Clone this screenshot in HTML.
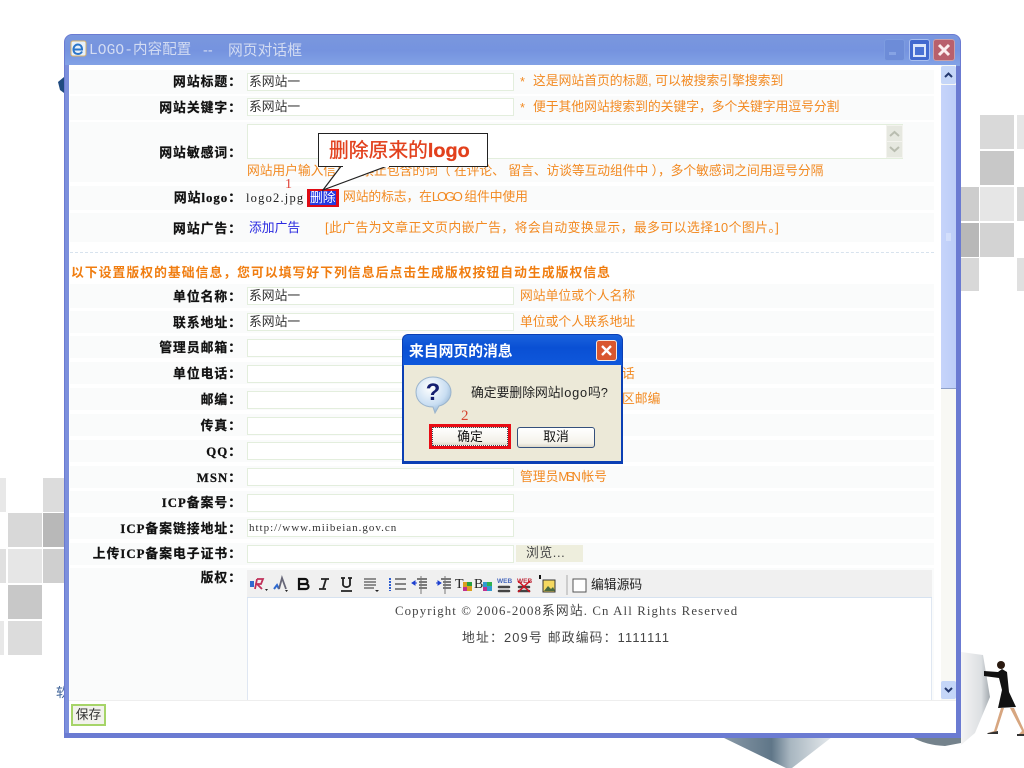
<!DOCTYPE html>
<html lang="zh-CN">
<head>
<meta charset="utf-8">
<title>LOGO-内容配置</title>
<style>
html,body{margin:0;padding:0;background:#fff;}
body{position:relative;width:1024px;height:768px;overflow:hidden;font-family:"Liberation Sans","Noto Sans CJK SC",sans-serif;font-size:12.8px;filter:blur(.3px);}
div,span.a{position:absolute;white-space:nowrap;box-sizing:border-box;}
.l{left:70px;width:172px;margin-top:1px;text-align:right;font-weight:bold;color:#111;height:18px;line-height:18px;letter-spacing:1px;font-family:"Liberation Serif","Noto Sans CJK TC",serif;-webkit-text-stroke:.25px #111;}
.i{left:247px;width:267px;height:18px;background:#fff;border:1px solid #e3eedd;color:#333;line-height:16px;padding-left:1px;}
.h{color:#f28a22;height:18px;line-height:18px;}
.b{left:70px;width:864px;background:#fafbfb;}
</style>
</head>
<body>
<!-- background squares right -->
<div style="left:980px;top:115px;width:34px;height:34px;background:#d9d9d9"></div>
<div style="left:1017px;top:115px;width:7px;height:34px;background:#e6e6e6"></div>
<div style="left:980px;top:151px;width:34px;height:34px;background:#c8c8c8"></div>
<div style="left:960px;top:187px;width:19px;height:34px;background:#cdcdcd"></div>
<div style="left:980px;top:187px;width:34px;height:34px;background:#e6e6e6"></div>
<div style="left:1017px;top:187px;width:7px;height:34px;background:#d8d8d8"></div>
<div style="left:960px;top:223px;width:19px;height:34px;background:#b8b8b8"></div>
<div style="left:980px;top:223px;width:34px;height:34px;background:#d3d3d3"></div>
<div style="left:960px;top:258px;width:19px;height:33px;background:#d8d8d8"></div>
<div style="left:1017px;top:258px;width:7px;height:33px;background:#e0e0e0"></div>
<!-- background squares left -->
<div style="left:0;top:478px;width:6px;height:34px;background:#e8e8e8"></div>
<div style="left:43px;top:478px;width:22px;height:34px;background:#dcdcdc"></div>
<div style="left:8px;top:513px;width:34px;height:34px;background:#d8d8d8"></div>
<div style="left:43px;top:513px;width:22px;height:34px;background:#b8b8b8"></div>
<div style="left:0;top:549px;width:6px;height:34px;background:#e0e0e0"></div>
<div style="left:8px;top:549px;width:34px;height:34px;background:#e6e6e6"></div>
<div style="left:43px;top:549px;width:22px;height:34px;background:#cfcfcf"></div>
<div style="left:8px;top:585px;width:34px;height:34px;background:#c8c8c8"></div>
<div style="left:0;top:621px;width:4px;height:34px;background:#e8e8e8"></div>
<div style="left:8px;top:621px;width:34px;height:34px;background:#dcdcdc"></div>
<div style="left:56px;top:684px;color:#3a5f96;font-size:13px;line-height:18px;">软</div>
<svg style="position:absolute;left:0;top:0" width="1024" height="768">
<defs>
<linearGradient id="v" x1="0" y1="0" x2="1" y2="0"><stop offset="0" stop-color="#8a9aa8"/><stop offset=".45" stop-color="#5f7688"/><stop offset=".62" stop-color="#a8b6c0"/><stop offset="1" stop-color="#e6eaed"/></linearGradient>
<linearGradient id="c" x1="0" y1="0" x2="1" y2="0"><stop offset="0" stop-color="#f4f4f4"/><stop offset=".7" stop-color="#dcdfe2"/><stop offset="1" stop-color="#a2a9ae"/></linearGradient>
</defs>
<path d="M58 82L64 77V93L60 90Z" fill="#1f4a80"/>
<path d="M722 737H832L792 768H786Z" fill="url(#v)"/>
<path d="M912 737H961V743L945 746Q925 745 912 737Z" fill="#74828c"/>
<path d="M961 652L983 655L990 697L975 733L961 745Z" fill="url(#c)"/>
<path d="M984 671L998 672L1002 669L1007 672L1009 692L1016 707L998 708L1002 690L999 678L984 676Z" fill="#111"/>
<circle cx="1001" cy="665" r="4" fill="#2a1a10"/>
<path d="M1001 708L1004 708L996 733H988L994 731ZM1010 708L1014 708L1024 730V735L1018 735L1022 731Z" fill="#d7a680"/>
<path d="M988 733L998 731V734H987ZM1017 734H1024V736H1017Z" fill="#333"/>
</svg>
<!-- window -->
<div style="left:64px;top:34px;width:897px;height:704px;background:#6b7bd2;border-radius:8px 8px 0 0;"></div>
<div style="left:65px;top:35px;width:895px;height:31px;background:linear-gradient(#7a97de,#7593df 50%,#83a3e6);border-radius:7px 7px 0 0;"></div>
<div style="left:69px;top:65px;width:887px;height:668px;background:#fff;"></div>
<div style="left:65px;top:65px;width:4px;height:668px;background:#7c8fdc;"></div>
<svg style="position:absolute;left:70px;top:40px" width="18" height="18" viewBox="0 0 18 18">
<rect x="1" y="1" width="15" height="15" rx="2" fill="#e8f0fa" stroke="#d9b36a"/>
<path d="M4 9.5H12C12 6 10 4.5 8 4.5C5.5 4.5 3.5 6.5 3.5 9.5C3.5 12.5 5.500 14 8 14C10 14 11.300 13 12 11.500" fill="none" stroke="#2a75c9" stroke-width="2"/>
</svg>
<div style="left:89px;top:42px;color:#d3dcf2;font-size:14.500px;line-height:18px;font-family:'Liberation Mono','Noto Sans CJK SC',monospace;letter-spacing:.1px;">LOGO-内容配置</div>
<div style="left:203px;top:42px;color:#d3dcf2;font-size:14.500px;line-height:18px;">--</div>
<div style="left:228px;top:42px;color:#d3dcf2;font-size:14.800px;line-height:18px;">网页对话框</div>
<div style="left:884px;top:39px;width:21px;height:22px;background:#6d8cd8;border-radius:3px;border:1px solid #7d9ce0;"></div>
<div style="left:889px;top:52px;width:7px;height:3px;background:#86a3e4;"></div>
<div style="left:909px;top:39px;width:21px;height:22px;background:#4169cf;border-radius:3px;border:1px solid #a9bff0;"></div>
<div style="left:913px;top:44px;width:13px;height:13px;border:2px solid #dbe6fa;border-top-width:3px;background:#4a72d4;"></div>
<div style="left:933px;top:39px;width:22px;height:22px;background:#b8606c;border-radius:3px;border:1px solid #c9a0a8;"></div>
<svg style="position:absolute;left:937px;top:43px" width="14" height="14"><path d="M2 2L12 12M12 2L2 12" stroke="#fbeeee" stroke-width="3"/></svg>

<!-- row bands -->
<div class="b" style="top:70px;height:24px"></div>
<div class="b" style="top:96px;height:24px"></div>
<div class="b" style="top:122px;height:60px"></div>
<div class="b" style="top:186px;height:24px"></div>
<div class="b" style="top:213px;height:29px"></div>
<div class="b" style="top:284px;height:24px"></div>
<div class="b" style="top:311px;height:22px"></div>
<div class="b" style="top:336px;height:22px"></div>
<div class="b" style="top:362px;height:22px"></div>
<div class="b" style="top:388px;height:22px"></div>
<div class="b" style="top:414px;height:22px"></div>
<div class="b" style="top:440px;height:22px"></div>
<div class="b" style="top:466px;height:22px"></div>
<div class="b" style="top:491px;height:22px"></div>
<div class="b" style="top:517px;height:22px"></div>
<div class="b" style="top:543px;height:22px"></div>
<div class="b" style="top:568px;height:132px"></div>
<div style="left:70px;top:252px;width:864px;border-top:1px dashed #d8e3ee;height:1px"></div>

<div class="l" style="top:72px">网站标题：</div>
<div class="i" style="top:73px">系网站一</div>
<div class="h" style="left:520px;top:73px">*</div>
<div class="h" style="left:533px;top:72px">这是网站首页的标题, 可以被搜索引擎搜索到</div>
<div class="l" style="top:98px">网站关键字：</div>
<div class="i" style="top:98px">系网站一</div>
<div class="h" style="left:520px;top:99px">*</div>
<div class="h" style="left:533px;top:98px;letter-spacing:-.03px">便于其他网站搜索到的关键字，多个关键字用逗号分割</div>
<div class="l" style="top:143px">网站敏感词：</div>
<div class="i" style="top:124px;width:656px;height:35px"></div>
<div style="left:886px;top:125px;width:17px;height:33px;background:#f3f3ee;"></div>
<div style="left:887px;top:126px;width:15px;height:15px;background:#e6e8e0;"></div>
<div style="left:887px;top:142px;width:15px;height:15px;background:#e6e8e0;"></div>
<svg style="position:absolute;left:887px;top:126px" width="15" height="32"><path d="M3 10L7.500 6L12 10M3 21L7.500 25L12 21" fill="none" stroke="#b9bdb0" stroke-width="2"/></svg>
<div class="h" style="left:247px;top:162px;letter-spacing:-.08px">网站用户输入信息，禁止包含的词（ 在评论、 留言、访谈等互动组件中 ），多个敏感词之间用逗号分隔</div>
<div class="l" style="top:188px">网站logo：</div>
<div style="left:246px;top:189px;color:#222;line-height:18px;font-family:'Liberation Serif',serif;letter-spacing:1.200px;font-size:12.500px;">logo2.jpg</div>
<div style="left:285px;top:177px;color:#e0453a;font-size:14px;line-height:16px;font-family:'Liberation Serif',serif;">1</div>
<div style="left:307px;top:189px;width:32px;height:18px;background:#df0a14;"></div>
<div style="left:310px;top:191px;width:26px;height:14px;background:#2438e0;color:#fff;line-height:14px;font-size:12.800px;">删除</div>
<div class="h" style="left:343px;top:188px;letter-spacing:-.1px">网站的标志，在<span style="letter-spacing:-2px">LOGO</span>&nbsp;组件中使用</div>
<div class="l" style="top:219px">网站广告：</div>
<div style="left:249px;top:219px;color:#2a2ae0;line-height:18px;">添加广告</div>
<div class="h" style="left:325px;top:219px;letter-spacing:.46px">[此广告为文章正文页内嵌广告，将会自动变换显示，最多可以选择10个图片。]</div>
<div style="left:71px;top:264px;color:#f07d10;font-weight:bold;line-height:18px;letter-spacing:1.050px;">以下设置版权的基础信息，您可以填写好下列信息后点击生成版权按钮自动生成版权信息</div>

<div class="l" style="top:287px">单位名称：</div>
<div class="i" style="top:287px">系网站一</div>
<div class="h" style="left:520px;top:287px">网站单位或个人名称</div>
<div class="l" style="top:313px">联系地址：</div>
<div class="i" style="top:313px">系网站一</div>
<div class="h" style="left:520px;top:313px">单位或个人联系地址</div>
<div class="l" style="top:338px">管理员邮箱：</div>
<div class="i" style="top:339px"></div>
<div class="l" style="top:364px">单位电话：</div>
<div class="i" style="top:365px"></div>
<div class="h" style="left:622px;top:365px">话</div>
<div class="l" style="top:390px">邮编：</div>
<div class="i" style="top:391px"></div>
<div class="h" style="left:622px;top:390px">区邮编</div>
<div class="l" style="top:416px">传真：</div>
<div class="i" style="top:417px"></div>
<div class="l" style="top:442px">QQ：</div>
<div class="i" style="top:442px"></div>
<div class="l" style="top:468px">MSN：</div>
<div class="i" style="top:468px"></div>
<div class="h" style="left:520px;top:468px">管理员<span style="letter-spacing:-3px">MSN</span>&nbsp;帐号</div>
<div class="l" style="top:493px">ICP备案号：</div>
<div class="i" style="top:494px"></div>
<div class="l" style="top:519px">ICP备案链接地址：</div>
<div class="i" style="top:519px;font-family:'Liberation Serif',serif;font-size:11px;letter-spacing:1px;">http://www.miibeian.gov.cn</div>
<div class="l" style="top:544px">上传ICP备案电子证书：</div>
<div class="i" style="top:545px"></div>
<div style="left:516px;top:545px;width:67px;height:17px;background:#eeeedd;color:#444;line-height:16px;padding-left:10px;letter-spacing:.6px;">浏览...</div>
<div class="l" style="top:568px">版权：</div>

<!-- editor -->
<div style="left:247px;top:597px;width:685px;height:104px;background:#fff;border-left:1px solid #dfe7f2;border-right:1px solid #dfe7f2;"></div>
<div style="left:247px;top:570px;width:685px;height:28px;background:#f0f0f0;border-bottom:1px solid #d6e2f0;"></div>
<svg style="position:absolute;left:247px;top:570px" width="340" height="28" viewBox="0 0 340 28">
<path d="M10 9l-2 10M10 9h6l-2 5h-4l5 5" fill="none" stroke="#c0305a" stroke-width="1.800"/>
<rect x="3" y="11" width="4" height="6" fill="#2f6ad0"/>
<path d="M18 19l3 0-1.500 2z" fill="#222"/>
<path d="M27 19l3-4 2 4" fill="none" stroke="#2f6ad0" stroke-width="2"/>
<path d="M32 19L35 8L39 19" fill="none" stroke="#667" stroke-width="1.800"/>
<path d="M38 20h3l-1.500 2z" fill="#222"/>
<path d="M52 9h6a2.500 2.500 0 0 1 0 5h-6zM52 14h7a2.500 2.500 0 0 1 0 5h-7z" fill="none" stroke="#111" stroke-width="2.200"/>
<path d="M76 19L79 9M74 9h8M72 19h7" stroke="#222" stroke-width="1.800" fill="none"/>
<path d="M96 8v7a4 4 0 0 0 7 0V8M94 8h4M101 8h4M94 21h11" stroke="#222" stroke-width="1.800" fill="none"/>
<path d="M117 9h12M117 12h12M117 15h12M117 18h10" stroke="#555" stroke-width="1.300"/>
<path d="M128 20h4l-2 2z" fill="#222"/>
<path d="M143 8v13" stroke="#2f5fd0" stroke-width="2" stroke-dasharray="2 1"/>
<path d="M148 9h11M148 14h11M148 19h11" stroke="#444" stroke-width="1.300"/>
<path d="M165 13h5M165 13l3-2v4z" stroke="#1c3fd0" fill="#1c3fd0"/>
<path d="M170 9h10M172 12h8M172 15h8M172 18h8" stroke="#333" stroke-width="1.200"/>
<path d="M174 6v18" stroke="#777"/>
<path d="M189 13h5M194 13l-3-2v4z" stroke="#1c3fd0" fill="#1c3fd0"/>
<path d="M194 9h10M196 12h8M196 15h8M196 18h8" stroke="#333" stroke-width="1.200"/>
<path d="M198 6v18" stroke="#777"/>
<text x="208" y="18" font-family="Liberation Serif, serif" font-size="14" fill="#222">T</text>
<rect x="216" y="12" width="9" height="9" fill="#d9a020"/><rect x="220" y="12" width="5" height="4" fill="#28a040"/><rect x="216" y="17" width="4" height="4" fill="#c03090"/>
<text x="227" y="18" font-family="Liberation Serif, serif" font-size="14" fill="#222">B</text>
<rect x="236" y="12" width="9" height="9" fill="#2f9ad0"/><rect x="240" y="12" width="5" height="4" fill="#30b050"/><rect x="236" y="17" width="4" height="4" fill="#c03090"/>
<text x="250" y="13" font-family="Liberation Sans, sans-serif" font-size="6.500" font-weight="bold" fill="#4466bb">WEB</text>
<path d="M252 17h10M252 21h10" stroke="#444" stroke-width="2.500" stroke-linecap="round"/>
<text x="270" y="13" font-family="Liberation Sans, sans-serif" font-size="6.500" font-weight="bold" fill="#c03040">WEB</text>
<path d="M272 17h10M272 21h10" stroke="#444" stroke-width="2.500" stroke-linecap="round"/>
<path d="M271 11l12 11M283 11l-12 11" stroke="#d01020" stroke-width="1.500"/>
<path d="M293 5v4" stroke="#111" stroke-width="2"/>
<rect x="296" y="10" width="12" height="12" fill="#f5d860" stroke="#333"/>
<path d="M297 21l4-5 3 3 2-2 2 4z" fill="#4a6a40"/>
<path d="M320 5v20" stroke="#aaa"/>
<rect x="326" y="9" width="13" height="13" fill="#fff" stroke="#555"/>
</svg>
<div style="left:591px;top:577px;color:#222;line-height:16px;">编辑源码</div>
<div style="left:395px;top:602px;color:#444;font-family:'Liberation Serif','Noto Sans CJK SC',serif;line-height:18px;font-size:12.800px;letter-spacing:1.120px;">Copyright © 2006-2008系网站. Cn All Rights Reserved</div>
<div style="left:462px;top:629px;color:#444;line-height:18px;letter-spacing:1.200px;">地址：209号 邮政编码：1111111</div>

<!-- main scrollbar -->
<div style="left:941px;top:65px;width:15px;height:635px;background:#f8f8f4;"></div>
<div style="left:941px;top:85px;width:15px;height:304px;background:linear-gradient(90deg,#c6d4fa,#bccdf8);border-bottom:1px solid #8ea0c8;"></div>
<div style="left:941px;top:66px;width:15px;height:18px;background:#c5d6f8;border-radius:2px;"></div>
<div style="left:941px;top:681px;width:15px;height:18px;background:#c5d6f8;border-radius:2px;"></div>
<svg style="position:absolute;left:941px;top:66px" width="15" height="633"><path d="M4 11L7.500 7.500L11 11M4 622L7.500 625.500L11 622" fill="none" stroke="#24386e" stroke-width="2"/><path d="M5 168h5M5 170h5M5 172h5M5 174h5" stroke="#e4ecfd"/></svg>

<!-- footer -->
<div style="left:69px;top:700px;width:887px;height:33px;background:#fff;border-top:1px solid #eee;"></div>
<div style="left:71px;top:704px;width:35px;height:22px;background:#f2f2ec;border:2px solid #a6d468;color:#333;line-height:18px;text-align:center;font-size:12.800px;">保存</div>

<!-- callout -->
<svg style="position:absolute;left:0;top:0" width="1024" height="768">
<path d="M342 165L323 190L390 165Z" fill="#fff" stroke="#222" stroke-width="1.200"/>
</svg>
<div style="left:318px;top:133px;width:170px;height:34px;background:#fff;border:1px solid #222;"></div>
<svg style="position:absolute;left:0;top:0" width="1024" height="768"><path d="M343 166H389" stroke="#fff" stroke-width="2"/></svg>
<div style="left:329px;top:138px;color:#e2401c;font-size:19.800px;line-height:26px;-webkit-text-stroke:.3px #e2401c;">删除原来的<b style="font-family:'Liberation Sans',sans-serif;">logo</b></div>

<!-- dialog -->
<div style="left:402px;top:334px;width:221px;height:130px;background:#0b3fb4;border-radius:6px 6px 0 0;"></div>
<div style="left:403px;top:335px;width:219px;height:31px;background:linear-gradient(#1a62dc,#0a50d4 40%,#0f58dc);border-radius:5px 5px 0 0;"></div>
<div style="left:404px;top:365px;width:217px;height:96px;background:#ece9d8;"></div>
<div style="left:409px;top:342px;color:#fff;font-weight:bold;font-size:14.800px;line-height:20px;">来自网页的消息</div>
<div style="left:596px;top:340px;width:21px;height:21px;background:#d9572f;border:1px solid #f3e6df;border-radius:3px;"></div>
<svg style="position:absolute;left:600px;top:344px" width="13" height="13"><path d="M2 2L11 11M11 2L2 11" stroke="#fff" stroke-width="2.400"/></svg>
<svg style="position:absolute;left:415px;top:376px" width="38" height="38" viewBox="0 0 38 38">
<defs><radialGradient id="q" cx=".4" cy=".3" r=".8"><stop offset="0" stop-color="#fff"/><stop offset=".6" stop-color="#c9def2"/><stop offset="1" stop-color="#7ea4c8"/></radialGradient></defs>
<path d="M18 1C28 1 36 8 36 16C36 24 29 29 24 30L20 37L18 31C8 31 1 25 1 16C1 8 8 1 18 1Z" fill="url(#q)" stroke="#9bb4cc"/>
<text x="18" y="24" text-anchor="middle" font-family="Liberation Sans, sans-serif" font-weight="bold" font-size="24" fill="#141e70">?</text>
</svg>
<div style="left:471px;top:384px;color:#222;line-height:18px;font-size:12.800px;">确定要删除网站<span style="letter-spacing:.8px">logo</span>吗?</div>
<div style="left:461px;top:408px;color:#d5432e;font-size:15px;line-height:16px;font-family:'Liberation Serif',serif;">2</div>
<div style="left:429px;top:424px;width:82px;height:25px;background:#e80c14;"></div>
<div style="left:432px;top:427px;width:76px;height:19px;background:linear-gradient(#fff,#f2f0e8 80%,#dcd8c8);border:1px dotted #445;color:#111;line-height:17px;text-align:center;font-size:12.800px;">确定</div>
<div style="left:517px;top:427px;width:78px;height:21px;background:linear-gradient(#fff,#f4f2ea 80%,#dcd8c8);border:1px solid #34507c;border-radius:3px;color:#111;line-height:18px;text-align:center;font-size:12.800px;">取消</div>
</body>
</html>
